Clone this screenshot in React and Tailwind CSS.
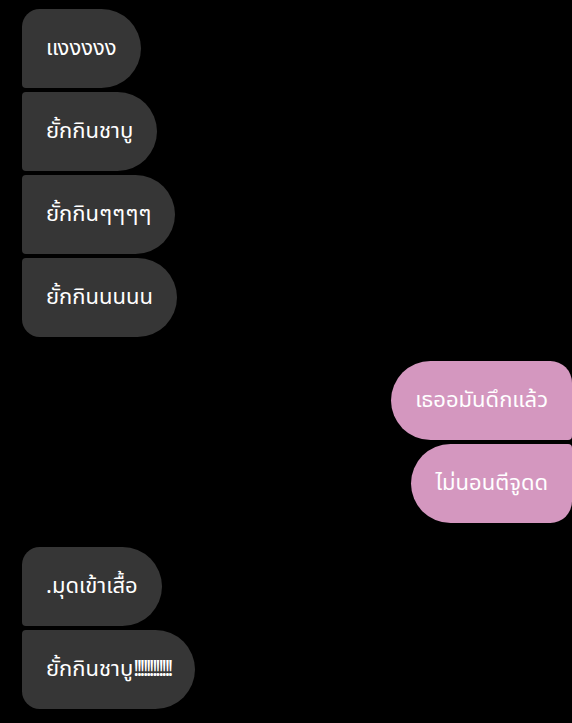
import React from "react";

const groups = [
  {
    side: "left",
    messages: ["แงงงงง", "ยั้กกินชาบู", "ยั้กกินๆๆๆๆ", "ยั้กกินนนนน"],
  },
  { side: "right", messages: ["เธออมันดึกแล้ว", "ไม่นอนตีจูดด"] },
  {
    side: "left",
    messages: [
      ".มุดเข้าเสื้อ",
      <>
        ยั้กกินชาบู
        <span className="tracking-[-2.8px]">!!!!!!!!!!!!</span>
      </>,
    ],
  },
];

const leftShape = (i, n) => {
  if (n === 1) return "rounded-[40px]";
  if (i === 0) return "rounded-r-[40px] rounded-tl-[18px] rounded-bl-[4px]";
  if (i === n - 1) return "rounded-r-[40px] rounded-tl-[4px] rounded-bl-[18px]";
  return "rounded-r-[40px] rounded-l-[4px]";
};

const rightShape = (i, n) => {
  if (n === 1) return "rounded-[40px]";
  if (i === 0) return "rounded-l-[40px] rounded-tr-[22px] rounded-br-[4px]";
  if (i === n - 1) return "rounded-l-[40px] rounded-tr-[4px] rounded-br-[22px]";
  return "rounded-l-[40px] rounded-r-[4px]";
};

const Bubble = ({ text, side, shape }) => (
  <div
    className={`px-6 py-6 text-[22px] leading-[31px] text-white whitespace-nowrap ${
      side === "left" ? "bg-[#363636] self-start" : "bg-[#d497bf] self-end"
    } ${shape}`}
  >
    {text}
  </div>
);

export default function App() {
  return (
    <div
      className="min-h-screen bg-black pt-[9px] pl-[22px] overflow-hidden flex flex-col gap-6"
      style={{ fontFamily: '"Noto Sans Thai", "Noto Sans", "DejaVu Sans", sans-serif' }}
    >
      {groups.map((g, gi) => (
        <div key={gi} className="flex flex-col gap-1">
          {g.messages.map((m, i) => (
            <Bubble
              key={i}
              text={m}
              side={g.side}
              shape={
                g.side === "left"
                  ? leftShape(i, g.messages.length)
                  : rightShape(i, g.messages.length)
              }
            />
          ))}
        </div>
      ))}
    </div>
  );
}
